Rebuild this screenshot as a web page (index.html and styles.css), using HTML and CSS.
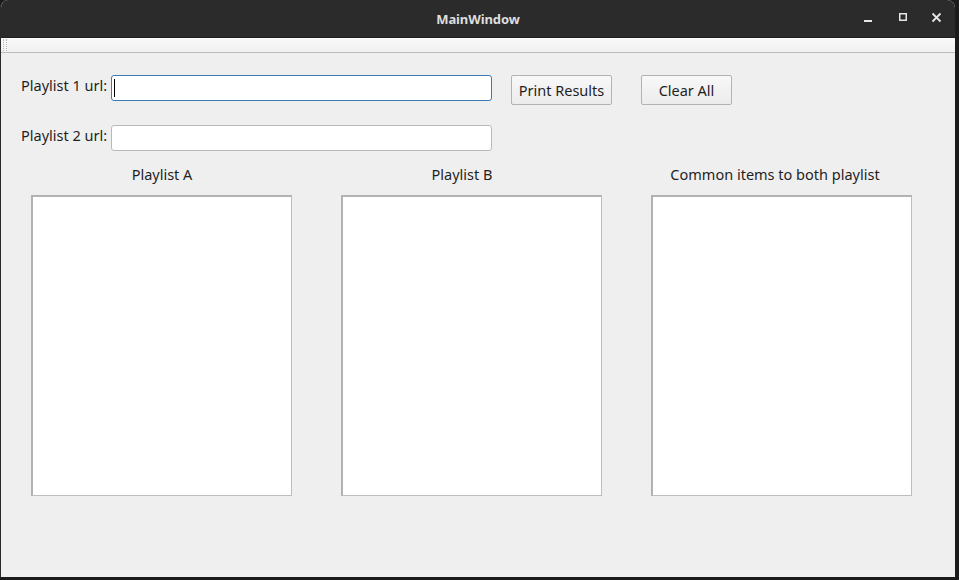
FILE: index.html
```html
<!DOCTYPE html>
<html>
<head>
<meta charset="utf-8">
<link rel="stylesheet" href="styles.css">
</head>
<body>
<div class="window">
  <div class="titlebar">
    <div class="title">MainWindow</div>
    <div class="controls">
      <svg class="ctl" width="12" height="12" viewBox="0 0 12 12"><rect x="1" y="8" width="8" height="2" fill="#e6e6e6"/></svg>
      <svg class="ctl" width="12" height="12" viewBox="0 0 12 12"><rect x="2.75" y="1.75" width="6.5" height="6.5" fill="none" stroke="#e6e6e6" stroke-width="1.5"/></svg>
      <svg class="ctl" width="12" height="12" viewBox="0 0 12 12"><path d="M1.5 1.5 L9.5 9.5 M9.5 1.5 L1.5 9.5" stroke="#e6e6e6" stroke-width="1.8"/></svg>
    </div>
  </div>
  <div class="toolbar"><div class="grip"></div></div>
  <div class="content">
    <div class="row row1">
      <div class="label">Playlist 1 url:</div>
      <div class="input focus"><span class="caret"></span></div>
      <div class="btn btn-print">Print Results</div>
      <div class="btn btn-clear">Clear All</div>
    </div>
    <div class="row row2">
      <div class="label">Playlist 2 url:</div>
      <div class="input"></div>
    </div>
    <div class="heads">
      <div class="head head-a">Playlist A</div>
      <div class="head head-b">Playlist B</div>
      <div class="head head-c">Common items to both playlist</div>
    </div>
    <div class="lists">
      <div class="list"></div>
      <div class="list"></div>
      <div class="list"></div>
    </div>
  </div>
</div>
</body>
</html>
```

FILE: styles.css
```css
html, body {
  margin: 0;
  padding: 0;
  width: 959px;
  height: 580px;
  overflow: hidden;
  background: #1b1b1b;
  font-family: "Noto Sans", "Open Sans", sans-serif;
}

.window {
  width: 954px;
  height: 577px;
  background: #efefef;
  border-left: 1px solid #2a2a2a;
  display: flex;
  flex-direction: column;
  border-radius: 8px 8px 0 0;
  overflow: hidden;
}

.titlebar {
  height: 37px;
  flex: none;
  background: #2b2b2b;
  border-bottom: 1px solid #1f1f1f;
  position: relative;
  display: flex;
  align-items: center;
  justify-content: center;
}

.title {
  color: #dedede;
  font-weight: bold;
  font-size: 13px;
  letter-spacing: -0.1px;
}

.controls {
  position: absolute;
  right: 12px;
  top: 12px;
  display: flex;
  gap: 22px;
}

.ctl {
  display: block;
}

.toolbar {
  height: 14px;
  flex: none;
  background: linear-gradient(#f9f9f9, #f1f1f1);
  border-bottom: 1px solid #bcbcbc;
  padding-left: 2px;
  display: flex;
  align-items: stretch;
}

.grip {
  width: 1px;
  border-left: 1px dotted #b8b8b8;
  border-right: 1px dotted #b8b8b8;
  padding: 0 1px 0 0;
  margin: 1px 0;
}

.content {
  flex: 1;
  display: flex;
  flex-direction: column;
}

.row {
  display: flex;
  align-items: flex-start;
  padding-left: 20px;
}

.row1 {
  margin-top: 22px;
}

.row2 {
  margin-top: 20px;
}

.label {
  width: 90px;
  height: 26px;
  line-height: 20px;
  font-size: 14.5px;
  color: #1f1f1f;
  white-space: nowrap;
}

.input {
  width: 379px;
  height: 24px;
  background: #ffffff;
  border: 1px solid #b9b9b9;
  border-radius: 3px;
  position: relative;
}

.input.focus {
  border-color: #3a7ab5;
}

.caret {
  position: absolute;
  left: 2px;
  top: 3px;
  width: 1px;
  height: 18px;
  background: #000;
}

.btn {
  height: 28px;
  border: 1px solid #b3b3b3;
  border-radius: 2px;
  background: linear-gradient(#f8f8f8, #ececec);
  font-size: 14.5px;
  color: #1f1f1f;
  display: flex;
  align-items: center;
  justify-content: center;
  box-sizing: content-box;
}

.btn-print {
  width: 99px;
  margin-left: 19px;
}

.btn-clear {
  width: 89px;
  margin-left: 29px;
}

.heads {
  display: flex;
  margin-top: 13px;
  height: 20px;
  font-size: 14.5px;
  color: #1f1f1f;
  line-height: 20px;
}

.head {
  text-align: center;
  white-space: nowrap;
}

.head-a {
  margin-left: 20px;
  width: 282px;
}

.head-b {
  margin-left: 18px;
  width: 282px;
}

.head-c {
  margin-left: 31px;
  width: 282px;
}

.lists {
  display: flex;
  gap: 49px;
  margin-top: 11px;
  padding-left: 30px;
}

.list {
  width: 258px;
  height: 298px;
  background: #ffffff;
  border: 1px solid #bdbdbd;
  border-top: 2px solid #b2b2b2;
  border-left: 2px solid #b2b2b2;
}
```
